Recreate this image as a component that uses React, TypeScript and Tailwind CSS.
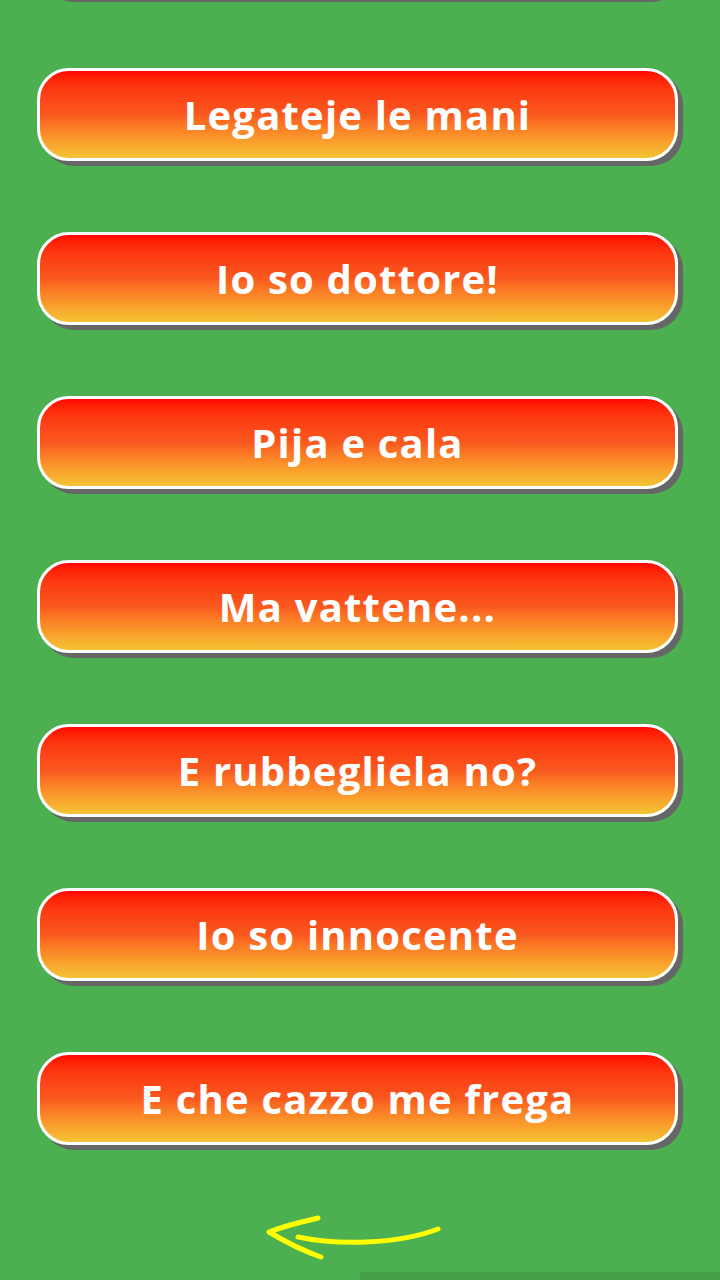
const phrases = [
  "Legateje le mani",
  "Io so dottore!",
  "Pija e cala",
  "Ma vattene...",
  "E rubbegliela no?",
  "Io so innocente",
  "E che cazzo me frega",
];

function SoundButton({ label }: { label?: string }) {
  return (
    <button className="flex h-[93px] w-[641px] shrink-0 items-center justify-center rounded-[32px] border-[3px] border-white bg-gradient-to-b from-[#ff0000] via-[#f9581f] to-[#f4c434] shadow-[5px_5px_0_#666666]">
      {label && (
        <span
          className="text-[40px] font-bold leading-none tracking-[1.2px] text-white"
          style={{ fontFamily: '"Open Sans", "Liberation Sans", sans-serif' }}
        >
          {label}
        </span>
      )}
    </button>
  );
}

function BackArrow() {
  return (
    <svg width="180" height="50" viewBox="0 0 180 50" fill="none">
      <path
        d="M52 3 C35 7 16 12 3 17 C18 26 35 35 55 42"
        stroke="#ffff00"
        strokeWidth="5"
        strokeLinecap="round"
        strokeLinejoin="round"
      />
      <path
        d="M32 22 C70 30 130 30 172 14"
        stroke="#ffff00"
        strokeWidth="5"
        strokeLinecap="round"
      />
    </svg>
  );
}

export default function App() {
  return (
    <main className="relative flex h-[1280px] w-[720px] flex-col overflow-hidden bg-[#4caf50]">
      <div className="-mt-[96px] flex flex-col gap-[71px] pl-[37px]">
        {/* previous button, scrolled mostly out of view */}
        <SoundButton />
        {phrases.map((p, key) => (
          <SoundButton key={key} label={p} />
        ))}
      </div>

      <div className="mt-[70px] flex pl-[266px]">
        <BackArrow />
      </div>

      <div className="absolute bottom-0 right-0 h-[8px] w-[360px] bg-[#43a047]" />
    </main>
  );
}
